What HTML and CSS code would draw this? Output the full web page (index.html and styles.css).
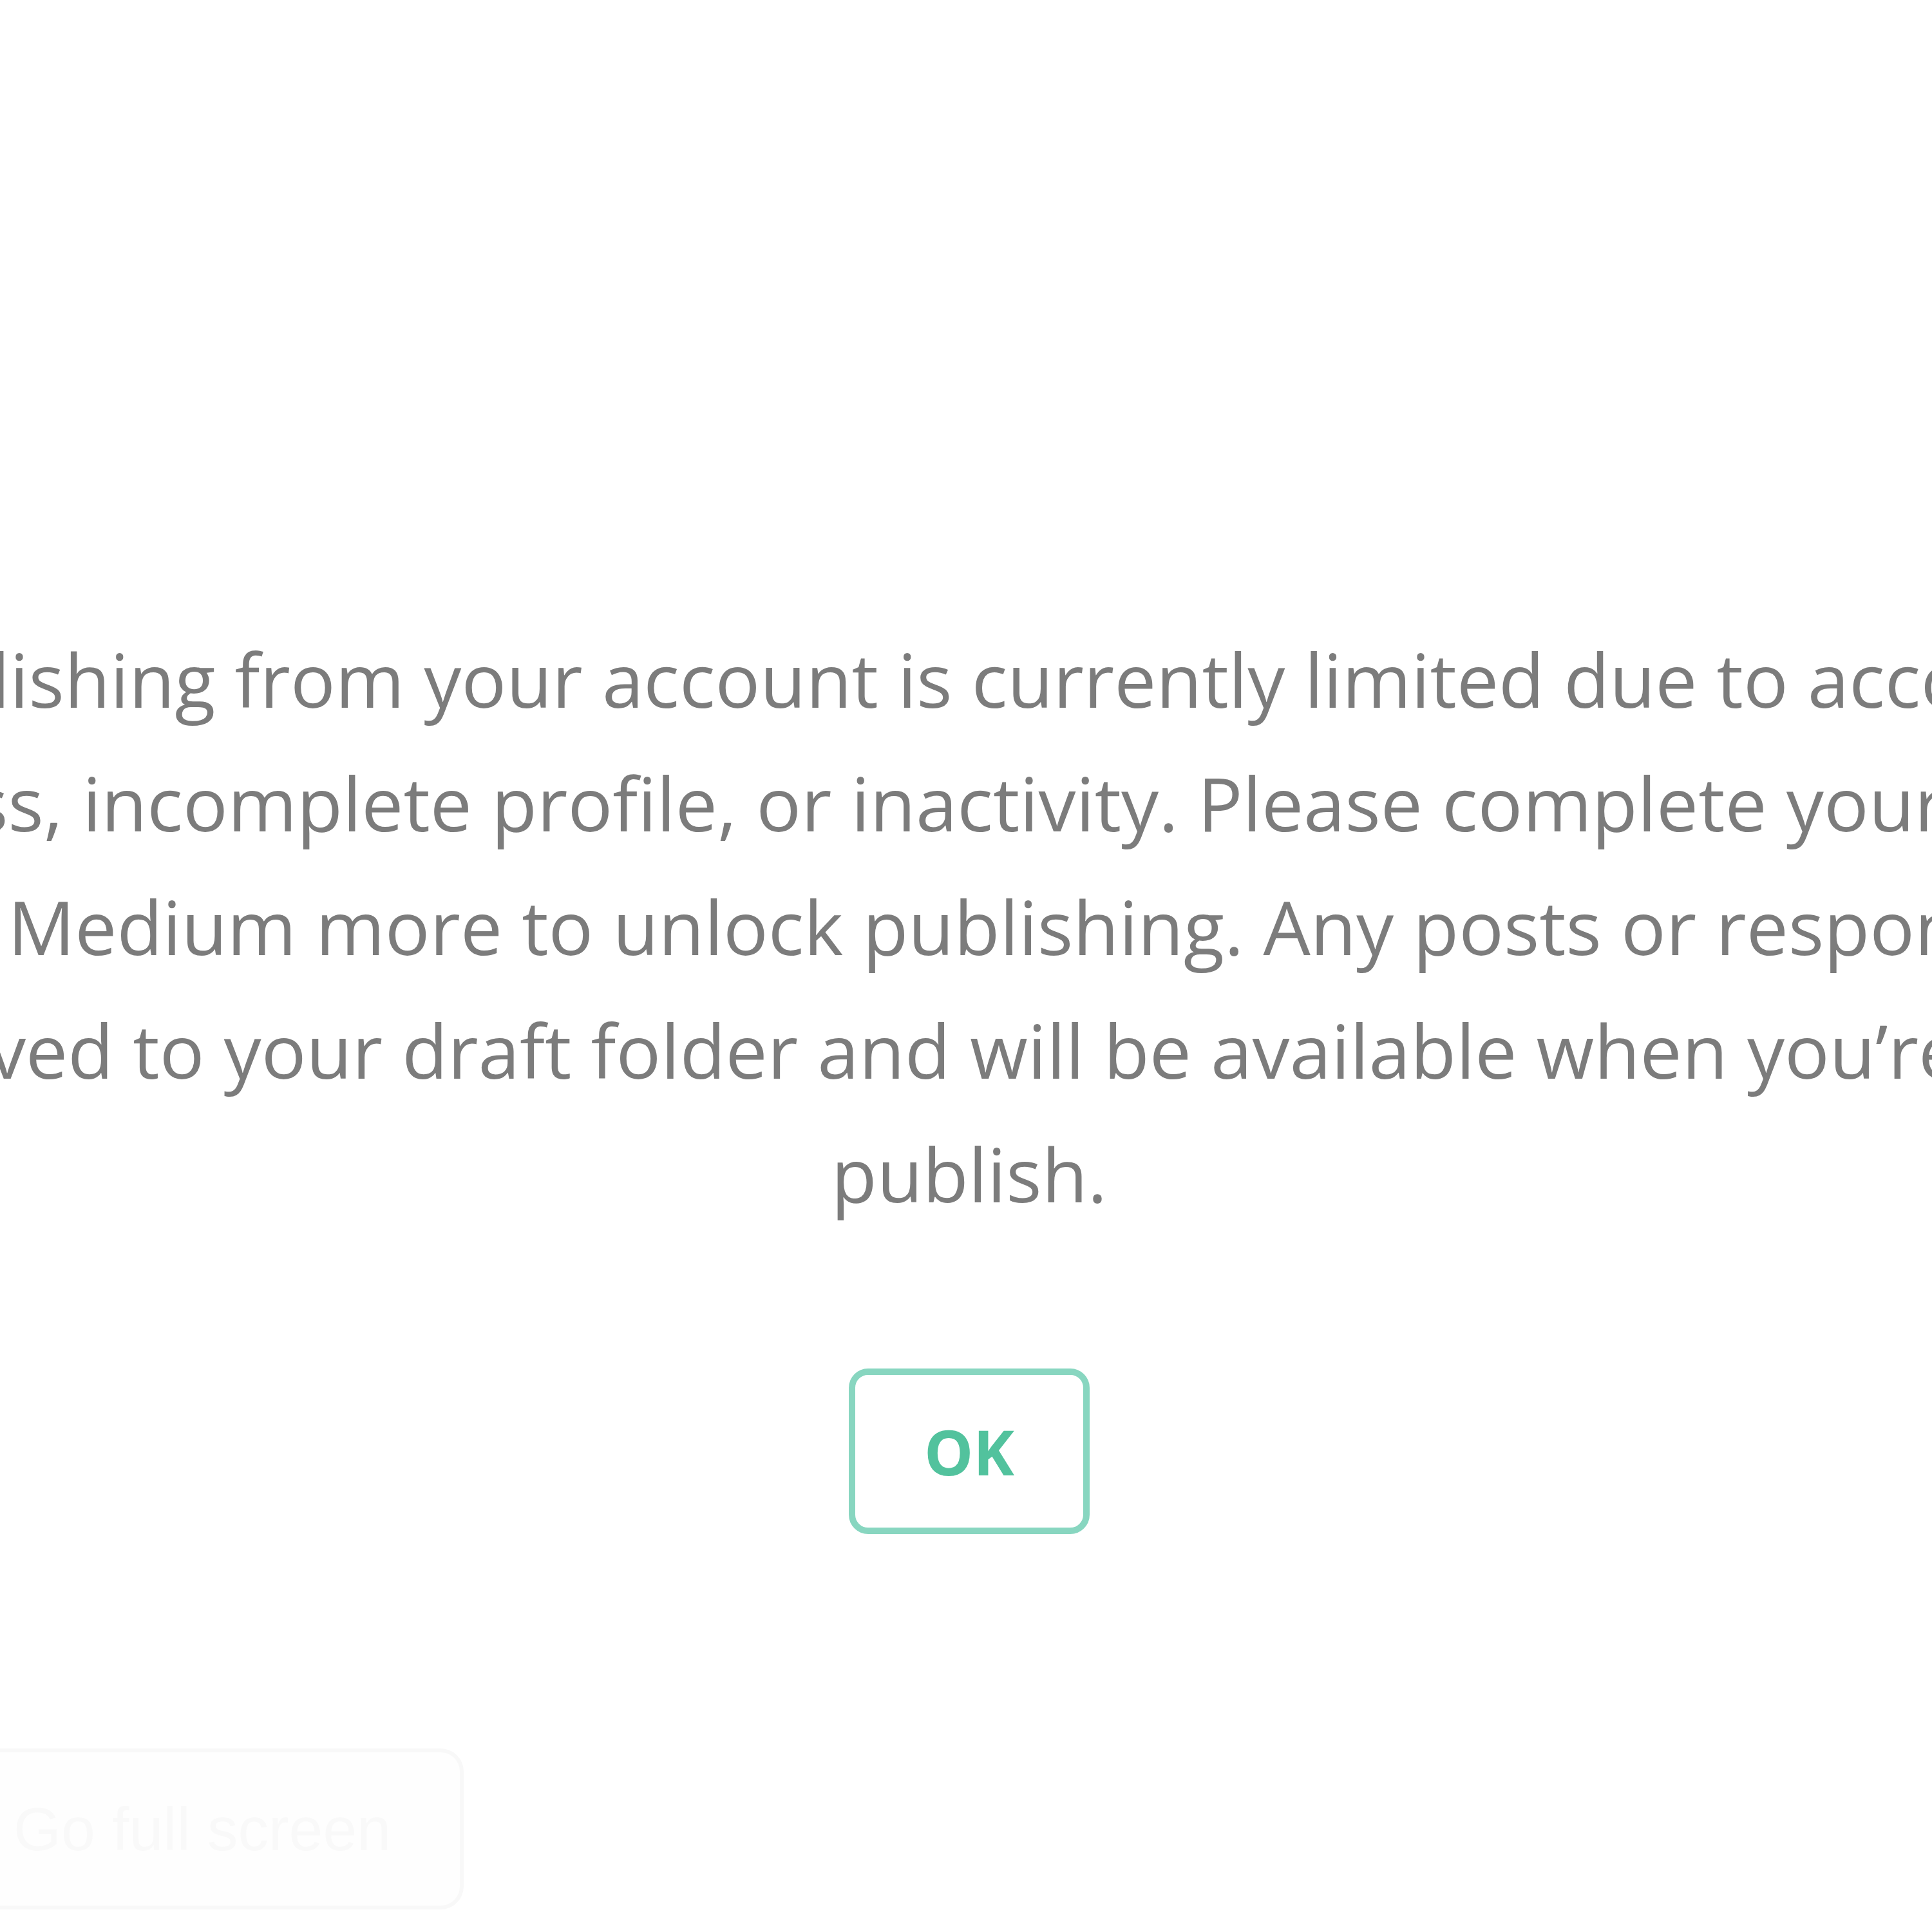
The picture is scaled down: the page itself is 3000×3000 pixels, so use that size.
FILE: index.html
```html
<!DOCTYPE html>
<html lang="en">
<head>
  <meta charset="UTF-8">
  <meta name="viewport" content="width=device-width, initial-scale=1.0">
  <title>Publishing limited</title>
  <link rel="stylesheet" href="styles.css">
</head>
<body>
  <div class="dialog">
    <p class="message">
      Publishing from your account is currently limited due to account<br>
      age, newness, incomplete profile, or inactivity. Please complete your profile, and<br>
      use Medium more to unlock publishing. Any posts or responses<br>
      will be saved to your draft folder and will be available when you’re ready to<br>
      publish.
    </p>
    <button class="ok-button" type="button">OK</button>
  </div>

  <button class="fullscreen" type="button">Go full screen</button>
</body>
</html>
```

FILE: styles.css
```css
html, body {
  height: 100%;
}
body {
  margin: 0;
  padding: 0 0 0 10px;
  background: #fff;
  overflow: hidden;
  display: flex;
  flex-direction: column;
  align-items: center;
  font-family: "Open Sans", sans-serif;
}
.dialog {
  display: flex;
  flex-direction: column;
  align-items: center;
  padding-top: 958px;
}
.message {
  width: 4800px;
  margin: 0;
  font-size: 116px;
  line-height: 192px;
  color: #7c7c7c;
  text-align: center;
  white-space: nowrap;
}
.ok-button {
  margin-top: 207px;
  width: 374px;
  height: 257px;
  border: 10px solid #88d6c0;
  border-radius: 30px;
  background: #fff;
  color: #52c29d;
  font-family: "Open Sans", sans-serif;
  font-size: 96px;
  font-weight: 700;
  cursor: pointer;
}
.fullscreen {
  position: absolute;
  left: -40px;
  bottom: 35px;
  width: 760px;
  height: 250px;
  padding: 0 0 0 55px;
  text-align: left;
  border: 6px solid #f8f8f8;
  border-radius: 36px;
  background: #fefefe;
  color: #f9f9f9;
  font-family: "Liberation Sans", Arial, sans-serif;
  font-size: 95px;
}
```
